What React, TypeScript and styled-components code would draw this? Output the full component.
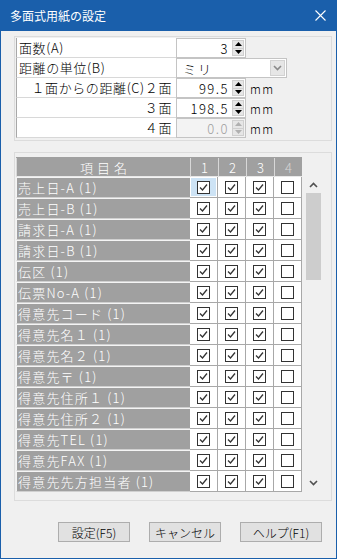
import React from 'react';
import styled, { createGlobalStyle } from 'styled-components';

const GlobalStyle = createGlobalStyle`
  html, body {
    margin: 0;
    padding: 0;
    background: #f0f0f0;
  }
  body {
    font-family: "Noto Sans CJK JP", "Noto Sans", sans-serif;
    font-weight: 300;
    color: #000;
  }
  * {
    box-sizing: border-box;
  }
`;

const Window = styled.div`
  width: 337px;
  height: 559px;
  display: flex;
  flex-direction: column;
  background: #f0f0f0;
  border: 1px solid #1a5fab;
  border-top: none;
`;

const TitleBar = styled.div`
  height: 31px;
  margin: 0 -1px;
  background: #1a5fab;
  color: #fff;
  display: flex;
  align-items: center;
  justify-content: space-between;
  padding: 0 11px 0 10px;
  font-size: 12px;
  font-weight: 400;
`;

const Body = styled.div`
  flex: 1;
  display: flex;
  flex-direction: column;
  padding: 5px 0 0 13px;
`;

const Panel = styled.div<{ $top?: number }>`
  width: 318px;
  margin-top: ${(p) => p.$top ?? 0}px;
  border: 1px solid #dcdcdc;
  padding: 1px 0 2px 1px;
`;

/* ---- upper settings table ---- */

const SettingRow = styled.div`
  display: flex;
  height: 20px;
`;

const SettingLabel = styled.div<{ $right?: boolean }>`
  width: 160px;
  height: 20px;
  background: #fff;
  border-left: 1px solid #a8a8a8;
  border-bottom: 1px solid #d8d8d8;
  display: flex;
  align-items: center;
  justify-content: ${(p) => (p.$right ? 'flex-end' : 'flex-start')};
  padding: 0 4px 0 2px;
  font-size: 13px;
  letter-spacing: 0.6px;
  white-space: nowrap;
`;

const NumBox = styled.div<{ $disabled?: boolean }>`
  width: 70px;
  height: 20px;
  background: ${(p) => (p.$disabled ? '#f3f3f3' : '#fff')};
  color: ${(p) => (p.$disabled ? '#a0a0a0' : '#000')};
  border: 1px solid #c4c4c4;
  display: flex;
  align-items: center;
  justify-content: flex-end;
  padding-right: 1px;
  font-size: 13px;
  letter-spacing: 1.5px;
`;

const NumValue = styled.span`
  padding-right: 3px;
`;

const Spinner = styled.div<{ $disabled?: boolean }>`
  width: 12px;
  height: 16px;
  display: flex;
  flex-direction: column;
  border: 1px solid #cfcfcf;
  background: #e6e6e6;
  color: ${(p) => (p.$disabled ? '#b0b0b0' : '#000')};
`;

const SpinHalf = styled.div<{ $down?: boolean }>`
  flex: 1;
  display: flex;
  align-items: center;
  justify-content: center;
  border-top: ${(p) => (p.$down ? '1px solid #cfcfcf' : 'none')};
`;

const Unit = styled.span`
  margin-left: 4px;
  font-size: 12px;
  letter-spacing: 1.5px;
  align-self: center;
`;

const Combo = styled.div`
  width: 111px;
  height: 20px;
  background: #fff;
  border: 1px solid #c4c4c4;
  display: flex;
  align-items: center;
  justify-content: space-between;
  padding: 0 1px 0 6px;
  font-size: 13px;
  letter-spacing: 2px;
`;

const DropButton = styled.div`
  width: 15px;
  height: 16px;
  background: #e6e6e6;
  border: 1px solid #d2d2d2;
  display: flex;
  align-items: center;
  justify-content: center;
`;

/* ---- item grid ---- */

const GridArea = styled.div`
  display: flex;
  padding-top: 3px;
  padding-bottom: 6px;
`;

const Grid = styled.div`
  display: grid;
  grid-template-columns: 174px repeat(4, 28px);
  grid-template-rows: 19px repeat(15, 21px);
  border-top: 1px solid #a0a0a0;
  width: 286px;
`;

const HeadCell = styled.div<{ $dim?: boolean }>`
  background: #a0a0a0;
  color: ${(p) => (p.$dim ? '#d6d6d6' : '#fff')};
  border-left: 1px solid #d8d8d8;
  border-bottom: 1px solid #e8e8e8;
  display: flex;
  align-items: center;
  justify-content: center;
  font-size: 13px;
  letter-spacing: 4px;
  padding-left: 4px;
`;

const NameCell = styled.div`
  background: #a0a0a0;
  color: #fff;
  border-top: 1px solid #f4f4f4;
  border-left: 1px solid #f4f4f4;
  border-bottom: 1px solid #d0d0d0;
  display: flex;
  align-items: center;
  padding-left: 1px;
  font-size: 13px;
  letter-spacing: 1.2px;
  white-space: nowrap;
`;

const CheckCell = styled.div`
  background: #fff;
  border-right: 1px solid #a8a8a8;
  border-bottom: 1px solid #a8a8a8;
  display: flex;
  align-items: center;
  justify-content: center;
  padding: 1px;
`;

const CheckFocus = styled.div<{ $active?: boolean }>`
  width: 100%;
  height: 100%;
  background: ${(p) => (p.$active ? '#cde3f5' : 'transparent')};
  display: flex;
  align-items: center;
  justify-content: center;
`;

const Box = styled.div`
  width: 13px;
  height: 13px;
  border: 1px solid #333;
  background: #fff;
  display: flex;
  align-items: center;
  justify-content: center;
`;

const ScrollBar = styled.div`
  width: 15px;
  margin-left: 4px;
  margin-top: 19px;
  height: 315px;
  display: flex;
  flex-direction: column;
`;

const ScrollArrow = styled.div<{ $h: number }>`
  height: ${(p) => p.$h}px;
  display: flex;
  align-items: center;
  justify-content: center;
`;

const ScrollTrack = styled.div`
  flex: 1;
`;

const Thumb = styled.div`
  height: 87px;
  background: #cdcdcd;
`;

/* ---- buttons ---- */

const ButtonRow = styled.div`
  display: flex;
  justify-content: flex-end;
  gap: 19px;
  padding-right: 14px;
  margin-top: 21px;
`;

const Button = styled.button<{ $w: number }>`
  width: ${(p) => p.$w}px;
  height: 20px;
  background: #e1e1e1;
  border: 1px solid #adadad;
  padding: 0;
  font-family: "Noto Sans CJK JP", "Noto Sans", sans-serif;
  font-weight: 300;
  font-size: 12px;
  color: #000;
`;

const Arrow = ({ up }: { up: boolean }) => (
  <svg width="7" height="4" viewBox="0 0 7 4">
    <path d={up ? 'M0 4 L3.5 0 L7 4 Z' : 'M0 0 L7 0 L3.5 4 Z'} fill="currentColor" />
  </svg>
);

const Chevron = ({ up, color }: { up: boolean; color: string }) => (
  <svg width="9" height="6" viewBox="0 0 9 6">
    <path
      d={up ? 'M1 5 L4.5 1.5 L8 5' : 'M1 1 L4.5 4.5 L8 1'}
      fill="none"
      stroke={color}
      strokeWidth="1.6"
    />
  </svg>
);

const Check = () => (
  <svg width="11" height="11" viewBox="0 0 11 11">
    <path d="M2 5.5 L4.5 8 L9 2.5" fill="none" stroke="#333" strokeWidth="1.3" />
  </svg>
);

const NumberField = ({ value, disabled }: { value: string; disabled?: boolean }) => (
  <NumBox $disabled={disabled}>
    <NumValue>{value}</NumValue>
    <Spinner $disabled={disabled}>
      <SpinHalf>
        <Arrow up />
      </SpinHalf>
      <SpinHalf $down>
        <Arrow up={false} />
      </SpinHalf>
    </Spinner>
  </NumBox>
);

const items = [
  '売上日-A (1)',
  '売上日-B (1)',
  '請求日-A (1)',
  '請求日-B (1)',
  '伝区 (1)',
  '伝票No-A (1)',
  '得意先コード (1)',
  '得意先名１ (1)',
  '得意先名２ (1)',
  '得意先〒 (1)',
  '得意先住所１ (1)',
  '得意先住所２ (1)',
  '得意先TEL (1)',
  '得意先FAX (1)',
  '得意先先方担当者 (1)',
];

const checked = [true, true, true, false];

export default function App() {
  return (
    <>
      <GlobalStyle />
      <Window>
        <TitleBar>
          <span>多面式用紙の設定</span>
          <svg width="11" height="11" viewBox="0 0 11 11">
            <path d="M0.5 0.5 L10.5 10.5 M10.5 0.5 L0.5 10.5" stroke="#fff" strokeWidth="1.1" />
          </svg>
        </TitleBar>
        <Body>
          <Panel>
            <SettingRow>
              <SettingLabel>面数(A)</SettingLabel>
              <NumberField value="3" />
            </SettingRow>
            <SettingRow>
              <SettingLabel>距離の単位(B)</SettingLabel>
              <Combo>
                <span>ミリ</span>
                <DropButton>
                  <Chevron up={false} color="#8a8a8a" />
                </DropButton>
              </Combo>
            </SettingRow>
            <SettingRow>
              <SettingLabel $right>１面からの距離(C)２面</SettingLabel>
              <NumberField value="99.5" />
              <Unit>mm</Unit>
            </SettingRow>
            <SettingRow>
              <SettingLabel $right>３面</SettingLabel>
              <NumberField value="198.5" />
              <Unit>mm</Unit>
            </SettingRow>
            <SettingRow>
              <SettingLabel $right>４面</SettingLabel>
              <NumberField value="0.0" disabled />
              <Unit>mm</Unit>
            </SettingRow>
          </Panel>

          <Panel $top={11}>
            <GridArea>
              <Grid>
                <HeadCell>項目名</HeadCell>
                <HeadCell>1</HeadCell>
                <HeadCell>2</HeadCell>
                <HeadCell>3</HeadCell>
                <HeadCell $dim>4</HeadCell>
                {items.map((name, r) => (
                  <React.Fragment key={name}>
                    <NameCell>{name}</NameCell>
                    {checked.map((on, c) => (
                      <CheckCell key={c}>
                        <CheckFocus $active={r === 0 && c === 0}>
                          <Box>{on && <Check />}</Box>
                        </CheckFocus>
                      </CheckCell>
                    ))}
                  </React.Fragment>
                ))}
              </Grid>
              <ScrollBar>
                <ScrollArrow $h={17}>
                  <Chevron up color="#505050" />
                </ScrollArrow>
                <ScrollTrack>
                  <Thumb />
                </ScrollTrack>
                <ScrollArrow $h={17}>
                  <Chevron up={false} color="#505050" />
                </ScrollArrow>
              </ScrollBar>
            </GridArea>
          </Panel>

          <ButtonRow>
            <Button $w={72}>設定(F5)</Button>
            <Button $w={72}>キャンセル</Button>
            <Button $w={82}>ヘルプ(F1)</Button>
          </ButtonRow>
        </Body>
      </Window>
    </>
  );
}
